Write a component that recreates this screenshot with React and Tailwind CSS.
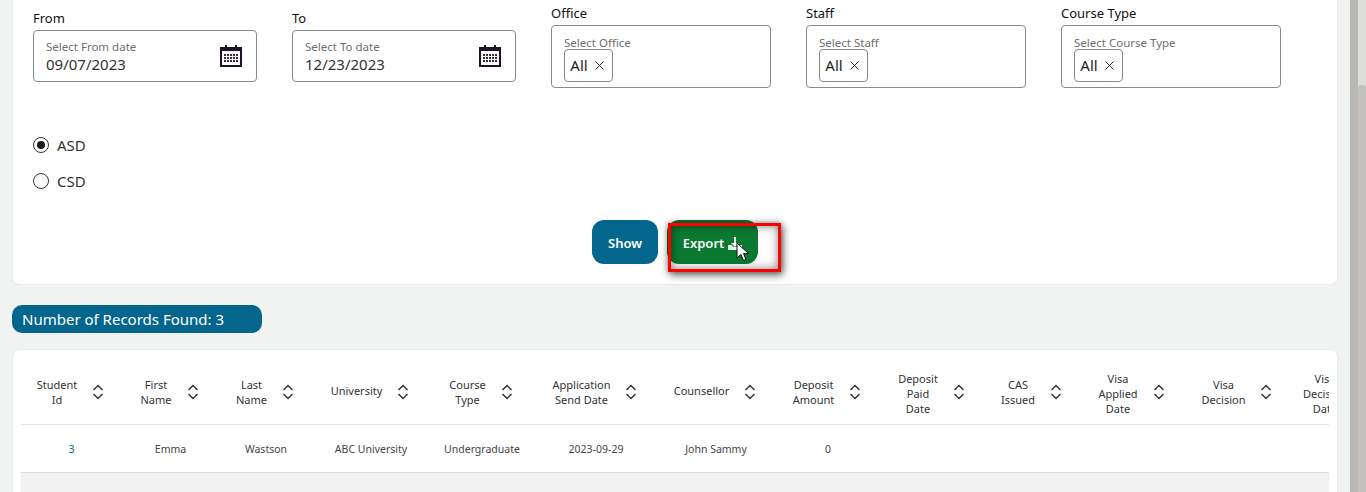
import { X } from "lucide-react";

const columns = [
  { label: ["Student", "Id"], width: "w-[101px]", value: "3", valueClass: "text-[#05668d]" },
  { label: ["First", "Name"], width: "w-[97px]", value: "Emma" },
  { label: ["Last", "Name"], width: "w-[94px]", value: "Wastson" },
  { label: ["University"], width: "w-[116px]", value: "ABC University" },
  { label: ["Course", "Type"], width: "w-[106px]", value: "Undergraduate" },
  { label: ["Application", "Send Date"], width: "w-[122px]", value: "2023-09-29" },
  { label: ["Counsellor"], width: "w-[118px]", value: "John Sammy" },
  { label: ["Deposit", "Amount"], width: "w-[106px]", value: "0" },
  { label: ["Deposit", "Paid", "Date"], width: "w-[103px]", value: "" },
  { label: ["CAS", "Issued"], width: "w-[97px]", value: "" },
  { label: ["Visa", "Applied", "Date"], width: "w-[103px]", value: "" },
  { label: ["Visa", "Decision"], width: "w-[108px]", value: "" },
  { label: ["Visa", "Decision", "Date"], width: "w-[95px]", value: "" },
];

// header text sits a little higher the fewer lines it has
const labelPadding = { 1: "pb-[6px]", 2: "pb-[3px]", 3: "" };

const CalendarIcon = () => (
  <svg width="24" height="24" viewBox="0 0 24 24" className="shrink-0">
    <rect x="2" y="4" width="20" height="18" fill="none" stroke="#1f1226" strokeWidth="2" />
    <rect x="2" y="4" width="20" height="3" fill="#1f1226" />
    <rect x="6" y="1" width="2" height="5" fill="#1f1226" />
    <rect x="16" y="1" width="2" height="5" fill="#1f1226" />
    {[10, 13, 16].map((y) =>
      [5, 8, 11, 14, 17].map((x) => (
        <rect key={`${x}-${y}`} x={x} y={y} width="2" height="2" fill="#3a2d40" />
      ))
    )}
  </svg>
);

const DateField = ({ label, placeholder, value, width }) => (
  <div className={`mt-[5px] ${width}`}>
    <div className="h-[24px] text-[13px] leading-[25px] text-[#111]">{label}</div>
    <div className="flex h-[52px] items-center justify-between rounded border border-[#8a8a8a] pl-3 pr-[13px]">
      <div className="pt-[2px]">
        <div className="mb-[1px] text-[11.5px] leading-[14px] text-[#6f6f6f]">{placeholder}</div>
        <div className="text-[15px] leading-[19px] text-[#333]">{value}</div>
      </div>
      <CalendarIcon />
    </div>
  </div>
);

const SelectField = ({ label, placeholder }) => (
  <div className="w-[220px]">
    <div className="h-[24px] text-[13px] leading-[25px] text-[#111]">{label}</div>
    <div className="h-[63px] rounded border border-[#8a8a8a] pl-3 pt-[10px]">
      <div className="text-[11.5px] leading-[13px] text-[#6f6f6f]">{placeholder}</div>
      <div className="flex h-[33px] w-[49px] items-center justify-center gap-1 rounded border border-[#8a8a8a] text-[15px] text-[#222]">
        All
        <X size={15} strokeWidth={1.5} />
      </div>
    </div>
  </div>
);

const Radio = ({ label, checked }) => (
  <label className="flex items-center gap-2 text-[15px] leading-[20px] text-[#333]">
    <span className="flex h-[16px] w-[16px] items-center justify-center rounded-full border border-[#333]">
      {checked && <span className="h-[8px] w-[8px] rounded-full bg-[#1a1a1a]" />}
    </span>
    {label}
  </label>
);

const SortIcon = () => (
  <span className="shrink-0 pb-[3px]">
    <svg width="12" height="16" viewBox="0 0 12 16" fill="none" stroke="#333" strokeWidth="1.5" className="block">
      <path d="M1.500 6 6 1.500 10.500 6" />
      <path d="M1.500 10 6 14.500 10.500 10" />
    </svg>
  </span>
);

export default function App() {
  return (
    <div className="flex h-screen overflow-hidden bg-[#f1f3f3] font-['Noto_Sans','Open_Sans',sans-serif]">
      <div className="w-[1350px] shrink-0 pl-3 pr-[12px]">
        <div className="relative h-[285px] rounded-b-lg border border-t-0 border-[#e9ecec] bg-white pl-5">
          <div className="flex items-start gap-[35px] pt-[1px]">
            <DateField label="From" placeholder="Select From date" value="09/07/2023" width="w-[224px]" />
            <DateField label="To" placeholder="Select To date" value="12/23/2023" width="w-[224px]" />
            <SelectField label="Office" placeholder="Select Office" />
            <SelectField label="Staff" placeholder="Select Staff" />
            <SelectField label="Course Type" placeholder="Select Course Type" />
          </div>

          <div className="mt-[47px] flex flex-col gap-4">
            <Radio label="ASD" checked />
            <Radio label="CSD" />
          </div>

          <div className="-ml-5 mt-[29px] flex justify-center gap-[9px]">
            <button className="h-[44px] w-[66px] rounded-xl bg-[#05668d] pt-[3px] text-[13px] font-semibold text-white">
              Show
            </button>
            <button className="flex h-[44px] w-[91px] items-center justify-center gap-1 rounded-xl bg-[#0a7a30] pt-[3px] text-[13px] font-semibold text-white">
              Export
              <svg width="14" height="14" viewBox="0 0 14 14" fill="#eaf5ec">
                <path d="M6 0h2v6h3L7 10 3 6h3z" />
                <path d="M0 8h3.500l2 2h3l2-2H14v5H0z" />
              </svg>
            </button>
          </div>

          {/* red highlight + mouse cursor drawn over the export button */}
          <div className="absolute left-[655px] top-[223px] h-[49px] w-[113px] border-[3px] border-[#ff0000] shadow-[2px_3px_8px_rgba(0,0,0,0.55),0_0_6px_rgba(0,0,0,0.35),inset_0_0_10px_rgba(0,0,0,0.5)]" />
          <svg className="absolute left-[723px] top-[242px]" width="14" height="20" viewBox="0 0 14 20">
            <path d="M1 1v15l4-3.500 2.500 6 2.500-1-2.500-6h5z" fill="#fff" stroke="#111" strokeWidth="1" />
          </svg>
        </div>

        <div className="mt-5 flex h-[28px] w-[250px] items-center rounded-[10px] bg-[#05668d] pl-[10px] text-[15px] text-white">
          Number of Records Found: 3
        </div>

        <div className="mt-4 h-[200px] rounded-lg border border-[#e9ecec] bg-white px-2 pt-[14px]">
          <div className="overflow-hidden">
            <table className="w-[1366px] table-fixed border-collapse text-[11px] leading-[15px] text-[#333]">
              <thead>
                <tr className="h-[60px] border-b border-[#e4e6e6]">
                  {columns.map((col) => (
                    <th key={col.label.join(" ")} className={`${col.width} font-normal`}>
                      <div className="flex items-center justify-center gap-[15px] pr-[2px]">
                        <div className={`text-center ${labelPadding[col.label.length]}`}>
                          {col.label.map((line) => (
                            <div key={line}>{line}</div>
                          ))}
                        </div>
                        <SortIcon />
                      </div>
                    </th>
                  ))}
                </tr>
              </thead>
              <tbody>
                <tr className="h-[48px] border-b border-[#dcdede] text-[10.5px] text-[#444]">
                  {columns.map((col) => (
                    <td key={col.label.join(" ")} className={`pt-[2px] text-center ${col.valueClass || ""}`}>
                      {col.value}
                    </td>
                  ))}
                </tr>
                <tr className="h-[48px] bg-[#f2f2f2]">
                  <td colSpan={columns.length} />
                </tr>
              </tbody>
            </table>
          </div>
        </div>
      </div>

      {/* browser scrollbar */}
      <div className="flex w-4 shrink-0">
        <div className="w-2 bg-[#b9b8b4]" />
        <div className="w-2 bg-[#dcdcda]">
          <div className="mt-[85px] h-full rounded-t-sm bg-[#c2c1bd]" />
        </div>
      </div>
    </div>
  );
}
